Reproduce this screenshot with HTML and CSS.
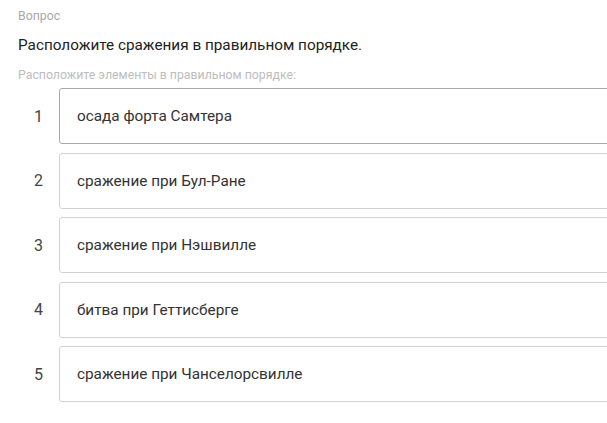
FILE: index.html
```html
<!DOCTYPE html>
<html lang="ru">
<head>
<meta charset="utf-8">
<link rel="stylesheet" href="styles.css">
</head>
<body>
<div class="page">
  <div class="label">Вопрос</div>
  <div class="question">Расположите сражения в правильном порядке.</div>
  <div class="hint">Расположите элементы в правильном порядке:</div>
  <ol class="list">
    <li class="row"><span class="num">1</span><div class="item active">осада форта Самтера</div></li>
    <li class="row"><span class="num">2</span><div class="item">сражение при Бул-Ране</div></li>
    <li class="row"><span class="num">3</span><div class="item">сражение при Нэшвилле</div></li>
    <li class="row"><span class="num">4</span><div class="item">битва при Геттисберге</div></li>
    <li class="row"><span class="num">5</span><div class="item">сражение при Чанселорсвилле</div></li>
  </ol>
</div>
</body>
</html>
```
FILE: styles.css
```css
html, body {
  margin: 0;
  padding: 0;
  overflow: hidden;
  background: #fff;
}
body {
  font-family: Roboto, "Liberation Sans", sans-serif;
}
.page {
  box-sizing: border-box;
  width: 607px;
  height: 423px;
  overflow: hidden;
  padding: 8px 0 0 18px;
}
.label {
  font-size: 12.3px;
  line-height: 16px;
  color: #a8a8a8;
}
.question {
  margin-top: 11px;
  font-size: 15.3px;
  line-height: 20px;
  color: #222;
}
.hint {
  margin-top: 12px;
  font-size: 12.3px;
  line-height: 16px;
  color: #bdbdbd;
}
.list {
  list-style: none;
  margin: 5px 0 0 0;
  padding: 0;
  display: flex;
  flex-direction: column;
  gap: 8.5px;
}
.row {
  display: flex;
  align-items: center;
}
.num {
  flex: none;
  width: 41px;
  text-align: center;
  font-size: 16px;
  color: #444;
}
.item {
  flex: none;
  box-sizing: border-box;
  width: 560px;
  height: 56px;
  border: 1px solid #d2d2d2;
  border-radius: 3px;
  padding-left: 17px;
  display: flex;
  align-items: center;
  font-size: 15.3px;
  color: #333;
}
.item.active {
  border-color: #a9a9a9;
}
```
